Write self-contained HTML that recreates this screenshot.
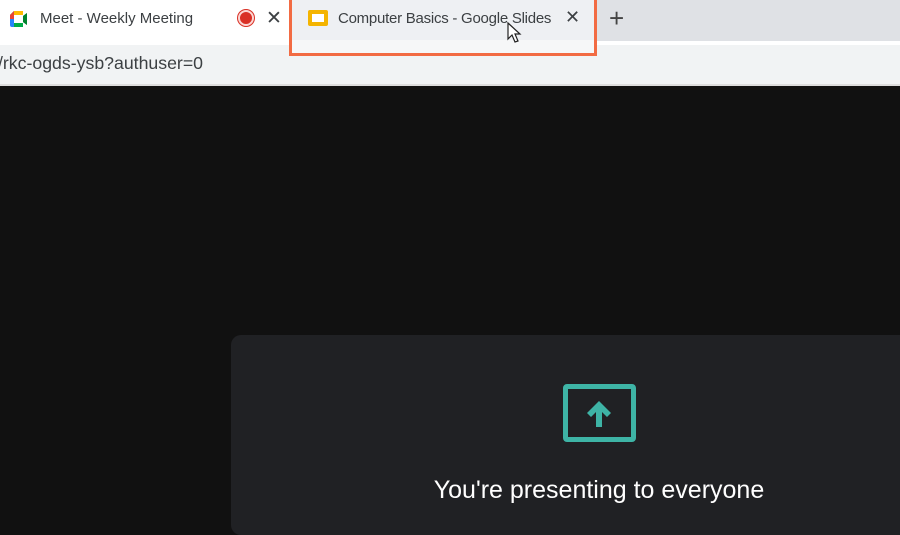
<!DOCTYPE html>
<html><head><style>
body{margin:0;width:900px;height:517px;overflow:hidden;background:#111;font-family:"Liberation Sans",Arial,sans-serif;position:relative}
.a{position:absolute}
</style></head><body>
<div class="a" style="left:0;top:0;width:900px;height:45px;background:#fff"></div>
<div class="a" style="left:596px;top:0;width:304px;height:41px;background:#dfe1e5"></div>
<div class="a" style="left:0;top:45px;width:900px;height:39px;background:#f1f3f4"></div>
<div class="a" style="left:0;top:84px;width:900px;height:2px;background:#ddd"></div>
<!-- meet icon -->
<svg class="a" style="left:10px;top:11px" width="20" height="16" viewBox="0 0 20 16">
<path d="M0 4 L4 0 H13 V5 L17 2 V14 L13 11 V16 H4 Z" fill="#00832d"/>
<path d="M4 0 H13 V8 H4 Z" fill="#ffba00"/><path d="M0 4 L4 0 V8 H0Z" fill="#ea4335"/>
<path d="M0 8 H4 V16 H2 Q0 16 0 14Z" fill="#2684fc"/><path d="M4 8 H13 V16 H4Z" fill="#00ac47"/>
<path d="M13 5 L17 2 V14 L13 11Z" fill="#00832d"/><rect x="4" y="4" width="9" height="8" fill="#fff"/>
</svg>
<div class="a" style="left:40px;top:10px;font-size:15px;color:#3c4043">Meet - Weekly Meeting</div>
<div class="a" style="left:238px;top:10px;width:12px;height:12px;border-radius:50%;background:#d93025;border:2px solid #fbd6d3;box-shadow:0 0 0 1px #d93025"></div>
<div class="a" style="left:266px;top:7px;font-size:19px;color:#3c4043">✕</div>
<div class="a" style="left:289px;top:0;width:302px;height:53px;border:3px solid #f26b43;border-top:none;background:#eef0f3"></div>
<div class="a" style="left:292px;top:40px;width:302px;height:13px;background:#f6f7f8"></div>
<div class="a" style="left:308px;top:10px;width:12px;height:8px;border:4px solid #f4b400;border-radius:2px;background:#fff"></div>
<div class="a" style="left:338px;top:10px;font-size:15px;color:#3c4043;letter-spacing:-0.25px">Computer Basics - Google Slides</div>
<div class="a" style="left:565px;top:7px;font-size:18px;color:#3c4043">✕</div>
<div class="a" style="left:609px;top:3px;font-size:26px;color:#444">+</div>
<svg class="a" style="left:507px;top:22px" width="16" height="22" viewBox="0 0 16 22"><path d="M1 1 V17 L5 13 L8 20 L11 19 L8 12 H13 Z" fill="#fff" stroke="#222" stroke-width="1.2"/></svg>
<div class="a" style="left:-2px;top:53px;font-size:17.7px;color:#3c4043">/rkc-ogds-ysb?authuser=0</div>
<div class="a" style="left:231px;top:335px;width:680px;height:200px;background:#202124;border-radius:10px"></div>
<div class="a" style="left:563px;top:384px;width:63px;height:48px;border:5px solid #3eb4a6;border-radius:4px"></div>
<svg class="a" style="left:585px;top:399px" width="28" height="30" viewBox="0 0 28 30"><path d="M14 2 L2 14 L6 18 L11 13 V28 H17 V13 L22 18 L26 14 Z" fill="#3eb4a6"/></svg>
<div class="a" style="left:350px;top:476px;width:498px;text-align:center;font-size:25px;color:#fff">You're presenting to everyone</div>
</body></html>
